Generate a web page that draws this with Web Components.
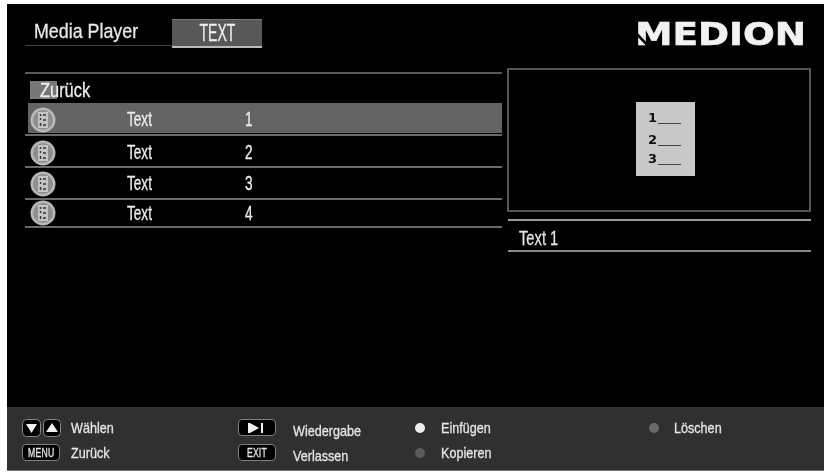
<!DOCTYPE html>
<html>
<head>
<meta charset="utf-8">
<title>Media Player</title>
<style>
html,body{margin:0;background:#fff;}
body{padding:4px 5px 5px 7px;width:817px;height:467px;overflow:hidden;font-family:"Liberation Sans",sans-serif;color:#eee;}
</style>
</head>
<body>
<tv-screen>
  <tv-header slot="header" title-text="Media Player" tab="TEXT"></tv-header>
  <media-list slot="list">
    <back-row>Zurück</back-row>
    <media-row selected name="Text" num="1" h="33" pad="3"></media-row>
    <media-row name="Text" num="2" h="32" pad="3"></media-row>
    <media-row name="Text" num="3" h="32" pad="1"></media-row>
    <media-row name="Text" num="4" h="28" pad="0"></media-row>
  </media-list>
  <preview-pane slot="preview" caption="Text 1"></preview-pane>
  <hint-bar slot="footer"></hint-bar>
</tv-screen>
<script>
// helper, kept short: every element uses the same few lines
function shadow(el, html) {
  el.attachShadow({ mode: "open" }).innerHTML = html;
}

// the TV font is condensed and none of the installed ones is, so squeeze it
class SqText extends HTMLElement {
  connectedCallback() {
    var sx = this.getAttribute("sx") || 0.84;
    var origin = this.getAttribute("origin") || "left";
    shadow(this, `
    <style>
      :host{display:inline-block;white-space:nowrap;transform:scaleX(${sx});transform-origin:${origin} center;-webkit-text-stroke:.3px currentColor;}
    </style>
    <slot></slot>`);
  }
}
customElements.define("sq-text", SqText);

class TvScreen extends HTMLElement {
  connectedCallback() {
    shadow(this, `
    <style>
      :host{display:flex;flex-direction:column;height:467px;background:#000;filter:blur(.6px);}
      .main{flex:1;display:flex;padding:0 13px 0 18px;}
      .left{width:477px;}
      .right{margin-left:6px;flex:1;}
    </style>
    <slot name="header"></slot>
    <div class="main">
      <div class="left"><slot name="list"></slot></div>
      <div class="right"><slot name="preview"></slot></div>
    </div>
    <slot name="footer"></slot>`);
  }
}
customElements.define("tv-screen", TvScreen);

class TvHeader extends HTMLElement {
  connectedCallback() {
    shadow(this, `
    <style>
      :host{display:flex;height:64px;padding:15px 18px 0 18px;box-sizing:border-box;align-items:flex-start;}
      .title{width:138px;height:26px;padding-left:9px;border-bottom:1px solid #444;font-size:21px;line-height:24px;color:#e8e8e8;}
      .tab{width:90px;height:26px;background:#585858;border-top:1px solid #777;border-bottom:2px solid #bbb;text-align:center;font-size:23px;line-height:27px;color:#eee;}
      .logo{position:relative;margin-left:auto;margin-top:2px;font:bold 32px/26px "DejaVu Sans",sans-serif;color:#f2f2f2;transform:scaleX(1.17);transform-origin:right center;white-space:nowrap;-webkit-text-stroke:.6px #f2f2f2;}
      .logo svg{position:absolute;left:0;top:0;}
    </style>
    <div class="title"><sq-text sx=".85">${this.getAttribute("title-text")}</sq-text></div>
    <div class="tab"><sq-text sx=".61" origin="center">${this.getAttribute("tab")}</sq-text></div>
    <div class="logo">MEDION<svg width="36" height="27" viewBox="0 0 36 27"><path d="M-1 10L12 26" stroke="#000" stroke-width="2.500"/></svg></div>`);
  }
}
customElements.define("tv-header", TvHeader);

class MediaList extends HTMLElement {
  connectedCallback() {
    shadow(this, `
    <style>
      :host{display:block;margin-top:4px;border-top:2px solid #5a5a5a;}
    </style>
    <slot></slot>`);
  }
}
customElements.define("media-list", MediaList);

class BackRow extends HTMLElement {
  connectedCallback() {
    shadow(this, `
    <style>
      :host{display:flex;align-items:center;height:29px;padding-left:5px;box-sizing:border-box;}
      .box{width:27px;height:18px;background:#777;margin-right:-17px;margin-top:3px;}
      span{font-size:20px;color:#eee;margin-top:3px;}
    </style>
    <div class="box"></div><span><sq-text sx=".82"><slot></slot></sq-text></span>`);
  }
}
customElements.define("back-row", BackRow);

class MediaRow extends HTMLElement {
  connectedCallback() {
    var sel = this.hasAttribute("selected");
    var h = this.getAttribute("h") || 31;
    var pad = this.getAttribute("pad") || 0;
    shadow(this, `
    <style>
      :host{display:block;height:${h}px;box-sizing:border-box;border-bottom:2px solid #6a6a6a;}
      .in{display:flex;align-items:center;box-sizing:border-box;height:${sel ? h - 3 : h - 2}px;padding-top:${pad}px;margin-left:3px;background:${sel ? "#646464" : "transparent"};}
      file-icon{margin-left:2px;}
      .name{margin-left:71px;width:118px;font-size:20px;color:#eee;}
      .num{font-size:20px;color:#eee;}
    </style>
    <div class="in">
      <file-icon></file-icon>
      <span class="name"><sq-text sx=".68">${this.getAttribute("name")}</sq-text></span>
      <span class="num"><sq-text sx=".68">${this.getAttribute("num")}</sq-text></span>
    </div>`);
  }
}
customElements.define("media-row", MediaRow);

class FileIcon extends HTMLElement {
  connectedCallback() {
    shadow(this, `
    <style>:host{display:block;width:26px;height:26px;}</style>
    <svg width="26" height="26" viewBox="0 0 26 26">
      <circle cx="13" cy="13" r="12.500" fill="#b8b8b8"/>
      <circle cx="13" cy="13" r="10" fill="#8e8e8e"/>
      <rect x="8" y="5" width="10" height="16" fill="#c4c4c4"/>
      <path d="M10.500 7v2M10.500 11v2M10.500 16v3M13 8h3M13 13h3M13 18h3" stroke="#333" stroke-width="1.400"/>
    </svg>`);
  }
}
customElements.define("file-icon", FileIcon);

class PreviewPane extends HTMLElement {
  connectedCallback() {
    shadow(this, `
    <style>
      :host{display:block;}
      .frame{height:144px;box-sizing:border-box;border:2px solid #555;display:flex;justify-content:center;padding:32px 0 0 13px;margin-left:-1px;}
      .page{width:59px;height:74px;background:#c8c8c8;box-sizing:border-box;padding:9px 0 0 12px;color:#111;font:bold 13px/13px "DejaVu Sans",sans-serif;}
      .page div{display:flex;align-items:flex-end;}
      .page i{display:block;width:23px;border-bottom:1px solid #444;margin-left:1px;}
      .cap{margin-top:7px;border-top:2px solid #999;border-bottom:2px solid #8a8a8a;height:29px;padding-left:11px;font-size:21px;line-height:33px;color:#e4e4e4;}
    </style>
    <div class="frame">
      <div class="page">
        <div style="height:13px">1<i></i></div>
        <div style="height:22px">2<i></i></div>
        <div style="height:19px">3<i></i></div>
      </div>
    </div>
    <div class="cap"><sq-text sx=".7">${this.getAttribute("caption")}</sq-text></div>`);
  }
}
customElements.define("preview-pane", PreviewPane);

class KeyCap extends HTMLElement {
  connectedCallback() {
    var w = this.getAttribute("w") || 38;
    shadow(this, `
    <style>
      :host{display:inline-flex;align-items:center;justify-content:center;width:${w}px;height:17px;box-sizing:border-box;background:#000;border:1px solid #808080;border-radius:4px;color:#e8e8e8;font-size:12px;}
      svg{display:block;}
    </style>
    <slot></slot>`);
  }
}
customElements.define("key-cap", KeyCap);

class HintItem extends HTMLElement {
  connectedCallback() {
    var x = this.getAttribute("dy") || 0;
    shadow(this, `
    <style>
      :host{display:flex;align-items:center;height:25px;}
      .ic{display:flex;align-items:center;width:var(--icw,49px);}
      .t{font-size:15px;color:#e6e6e6;margin-top:${x}px;}
    </style>
    <div class="ic"><slot name="icon"></slot></div><span class="t"><sq-text><slot></slot></sq-text></span>`);
  }
}
customElements.define("hint-item", HintItem);

class HintBar extends HTMLElement {
  connectedCallback() {
    shadow(this, `
    <style>
      :host{display:grid;grid-template-columns:216px 177px 234px 1fr;height:64px;box-sizing:border-box;background:#303030;padding:8px 0 0 15px;border-bottom:1px solid #777;}
      .c2{--icw:55px;}
      .c3{--icw:26px;}
      .c4{--icw:25px;}
      .dot{display:block;width:10px;height:10px;border-radius:50%;}
      sq-text{letter-spacing:.3px;}
    </style>
    <div>
      <hint-item><svg slot="icon" width="39" height="18" viewBox="0 0 39 18">
        <rect x=".5" y=".5" width="18" height="17" rx="4" fill="#000" stroke="#888"/><path d="M4 5h11l-5.500 9z" fill="#f0f0f0"/>
        <rect x="21.500" y=".5" width="17" height="17" rx="4" fill="#000" stroke="#888"/><path d="M24 13h12l-6-9z" fill="#f0f0f0"/>
      </svg>Wählen</hint-item>
      <hint-item><key-cap slot="icon" w="38"><sq-text sx=".72" origin="center">MENU</sq-text></key-cap>Zurück</hint-item>
    </div>
    <div class="c2">
      <hint-item dy="6"><key-cap slot="icon"><svg width="18" height="10" viewBox="0 0 18 10"><path d="M0 0h2v10H0zM2 0l9 5-9 5zM13 0h2v10h-2z" fill="#f0f0f0"/></svg></key-cap>Wiedergabe</hint-item>
      <hint-item dy="6"><key-cap slot="icon"><sq-text sx=".72" origin="center">EXIT</sq-text></key-cap>Verlassen</hint-item>
    </div>
    <div class="c3">
      <hint-item><span slot="icon" class="dot" style="background:#eee"></span>Einfügen</hint-item>
      <hint-item><span slot="icon" class="dot" style="background:#5c5c5c"></span>Kopieren</hint-item>
    </div>
    <div class="c4">
      <hint-item><span slot="icon" class="dot" style="background:#6a6a6a"></span>Löschen</hint-item>
    </div>`);
  }
}
customElements.define("hint-bar", HintBar);
</script>
</body>
</html>
